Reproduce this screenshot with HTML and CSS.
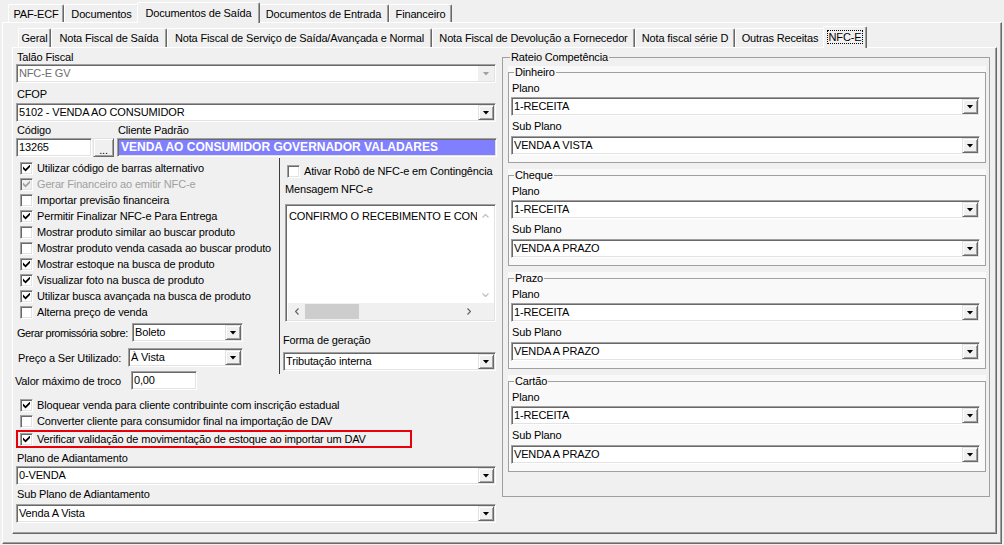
FILE: index.html
```html
<!DOCTYPE html>
<html lang="pt-BR">
<head>
<meta charset="utf-8">
<title>NFC-E</title>
<link rel="stylesheet" href="styles.css">
</head>
<body>
<div class="window">
  <div class="tabstrip outer-tabs">
    <div class="tab t1">PAF-ECF</div>
    <div class="tab t2">Documentos</div>
    <div class="tab t3 active">Documentos de Saída</div>
    <div class="tab t4">Documentos de Entrada</div>
    <div class="tab t5">Financeiro</div>
  </div>
  <div class="page outer-page">
    <div class="tabstrip inner-tabs">
      <div class="tab i1">Geral</div>
      <div class="tab i2">Nota Fiscal de Saída</div>
      <div class="tab i3">Nota Fiscal de Serviço de Saída/Avançada e Normal</div>
      <div class="tab i4">Nota Fiscal de Devolução a Fornecedor</div>
      <div class="tab i5">Nota fiscal série D</div>
      <div class="tab i6">Outras Receitas</div>
      <div class="tab i7 active"><span class="focus">NFC-E</span></div>
    </div>
    <div class="page inner-page">
      <div class="left-col">
        <div class="lbl">Talão Fiscal</div>
        <div class="combo disabled"><span class="val">NFC-E GV</span><span class="btn"><i class="arrow"></i></span></div>
        <div class="lbl mt5">CFOP</div>
        <div class="combo mt2"><span class="val">5102 - VENDA AO CONSUMIDOR</span><span class="btn"><i class="arrow"></i></span></div>
        <div class="code-labels mt2"><span class="lbl code-lbl">Código</span><span class="lbl">Cliente Padrão</span></div>
        <div class="code-row">
          <div class="edit code"><span class="val">13265</span></div>
          <div class="button dots">...</div>
          <div class="client">VENDA AO CONSUMIDOR GOVERNADOR VALADARES</div>
        </div>
        <div class="mid">
          <div class="checks">
            <div class="chk"><span class="box on"></span>Utilizar código de barras alternativo</div>
            <div class="chk dis"><span class="box on"></span>Gerar Financeiro ao emitir NFC-e</div>
            <div class="chk"><span class="box"></span>Importar previsão financeira</div>
            <div class="chk"><span class="box on"></span>Permitir Finalizar NFC-e Para Entrega</div>
            <div class="chk"><span class="box"></span>Mostrar produto similar ao buscar produto</div>
            <div class="chk"><span class="box"></span>Mostrar produto venda casada ao buscar produto</div>
            <div class="chk"><span class="box on"></span>Mostrar estoque na busca de produto</div>
            <div class="chk"><span class="box on"></span>Visualizar foto na busca de produto</div>
            <div class="chk"><span class="box on"></span>Utilizar busca avançada na busca de produto</div>
            <div class="chk"><span class="box"></span>Alterna preço de venda</div>
            <div class="frow promo">
              <span class="flabel">Gerar promissória sobre:</span>
              <div class="combo"><span class="val">Boleto</span><span class="btn"><i class="arrow"></i></span></div>
            </div>
            <div class="frow preco">
              <span class="flabel">Preço a Ser Utilizado:</span>
              <div class="combo"><span class="val">À Vista</span><span class="btn"><i class="arrow"></i></span></div>
            </div>
            <div class="frow troco">
              <span class="flabel">Valor máximo de troco</span>
              <div class="edit"><span class="val">0,00</span></div>
            </div>
          </div>
          <div class="side">
            <div class="chk"><span class="box"></span>Ativar Robô de NFC-e em Contingência</div>
            <div class="lbl msg-lbl">Mensagem NFC-e</div>
            <div class="memo">
              <div class="memo-text">CONFIRMO O RECEBIMENTO E CON</div>
              <div class="vscroll">
                <svg width="7" height="4" viewBox="0 0 7 4"><polyline points="0.5,3.5 3.5,0.5 6.5,3.5" fill="none" stroke="#bfbfbf" stroke-width="1.2"/></svg>
                <svg width="7" height="4" viewBox="0 0 7 4"><polyline points="0.5,0.5 3.5,3.5 6.5,0.5" fill="none" stroke="#bfbfbf" stroke-width="1.2"/></svg>
              </div>
              <div class="hscroll">
                <span class="sbtn"><svg width="4" height="7" viewBox="0 0 4 7"><polyline points="3.5,0.5 0.5,3.5 3.5,6.5" fill="none" stroke="#606060" stroke-width="1.2"/></svg></span>
                <span class="thumb"></span>
                <span class="track"></span>
                <span class="sbtn"><svg width="4" height="7" viewBox="0 0 4 7"><polyline points="0.5,0.5 3.5,3.5 0.5,6.5" fill="none" stroke="#606060" stroke-width="1.2"/></svg></span>
              </div>
              <div class="corner"></div>
            </div>
            <div class="lbl forma-lbl">Forma de geração</div>
            <div class="combo forma"><span class="val">Tributação interna</span><span class="btn"><i class="arrow"></i></span></div>
          </div>
        </div>
        <div class="bottom">
          <div class="chk"><span class="box on"></span>Bloquear venda para cliente contribuinte com inscrição estadual</div>
          <div class="chk"><span class="box"></span>Converter cliente para consumidor final na importação de DAV</div>
          <div class="chk marked"><span class="box on"></span>Verificar validação de movimentação de estoque ao importar um DAV</div>
          <div class="lbl plano-lbl">Plano de Adiantamento</div>
          <div class="combo mt1"><span class="val">0-VENDA</span><span class="btn"><i class="arrow"></i></span></div>
          <div class="lbl sub-lbl">Sub Plano de Adiantamento</div>
          <div class="combo mt3"><span class="val">Venda A Vista</span><span class="btn"><i class="arrow"></i></span></div>
        </div>
      </div>
      <fieldset class="rateio">
        <legend>Rateio Competência</legend>
        <div class="rateio-body">
          <div class="sub">
            <fieldset>
              <legend>Dinheiro</legend>
              <div class="sub-body">
                <div class="lbl">Plano</div>
                <div class="combo mt2"><span class="val">1-RECEITA</span><span class="btn"><i class="arrow"></i></span></div>
                <div class="lbl mt4">Sub Plano</div>
                <div class="combo mt3"><span class="val">VENDA A VISTA</span><span class="btn"><i class="arrow"></i></span></div>
              </div>
            </fieldset>
          </div>
          <div class="sub">
            <fieldset>
              <legend>Cheque</legend>
              <div class="sub-body">
                <div class="lbl">Plano</div>
                <div class="combo mt2"><span class="val">1-RECEITA</span><span class="btn"><i class="arrow"></i></span></div>
                <div class="lbl mt4">Sub Plano</div>
                <div class="combo mt3"><span class="val">VENDA A PRAZO</span><span class="btn"><i class="arrow"></i></span></div>
              </div>
            </fieldset>
          </div>
          <div class="sub">
            <fieldset>
              <legend>Prazo</legend>
              <div class="sub-body">
                <div class="lbl">Plano</div>
                <div class="combo mt2"><span class="val">1-RECEITA</span><span class="btn"><i class="arrow"></i></span></div>
                <div class="lbl mt4">Sub Plano</div>
                <div class="combo mt3"><span class="val">VENDA A PRAZO</span><span class="btn"><i class="arrow"></i></span></div>
              </div>
            </fieldset>
          </div>
          <div class="sub">
            <fieldset>
              <legend>Cartão</legend>
              <div class="sub-body">
                <div class="lbl">Plano</div>
                <div class="combo mt2"><span class="val">1-RECEITA</span><span class="btn"><i class="arrow"></i></span></div>
                <div class="lbl mt4">Sub Plano</div>
                <div class="combo mt3"><span class="val">VENDA A PRAZO</span><span class="btn"><i class="arrow"></i></span></div>
              </div>
            </fieldset>
          </div>
        </div>
      </fieldset>
    </div>
  </div>
</div>
</body>
</html>
```
FILE: styles.css
```css
* { box-sizing: border-box; }
html, body { margin: 0; padding: 0; }
body {
  width: 1004px;
  height: 545px;
  overflow: hidden;
  background: #f0f0f0;
  font-family: "Liberation Sans", Arial, sans-serif;
  font-size: 11px;
  letter-spacing: -0.15px;
  color: #000;
}

.window { padding: 2px 2px 0 2px; }

/* ---------- tabs ---------- */
.tabstrip { display: flex; align-items: flex-end; }
.outer-tabs { height: 20px; padding-left: 6px; }
.inner-tabs { height: 24px; padding-left: 15px; }

.tab {
  height: 18px;
  padding-top: 2px;
  line-height: 15px;
  text-align: center;
  white-space: nowrap;
  background: #f0f0f0;
  border-top: 1px solid #fff;
  border-left: 1px solid #fff;
  border-right: 1px solid #696969;
  box-shadow: inset -1px 0 0 #a0a0a0;
  border-radius: 2px 2px 0 0;
}
.inner-tabs .tab { height: 19px; }
.tab.active {
  position: relative;
  z-index: 1;
  height: 21px;
  padding-top: 3px;
  margin: 0 -2px -1px;
}
.inner-tabs .tab.active { height: 22px; padding-top: 3px; }
.focus { outline: 1px dotted #000; outline-offset: 0; padding: 0 1px; }

.t1 { width: 56px; }
.t2 { width: 75px; }
.t3 { width: 123px; }
.t4 { width: 131px; }
.t5 { width: 63px; }

.i1 { width: 33px; }
.i2 { width: 116px; }
.i3 { width: 265px; }
.i4 { width: 203px; }
.i5 { width: 100px; }
.i6 { width: 90px; }
.i7 { width: 44px; }

/* ---------- pages ---------- */
.page {
  border-top: 1px solid #fff;
  border-left: 1px solid #fff;
  border-right: 1px solid #696969;
  border-bottom: 1px solid #696969;
  box-shadow: inset -1px -1px 0 #a0a0a0;
}
.outer-page { width: 1000px; height: 522px; }
.inner-page {
  margin-left: 9px;
  width: 985px;
  height: 487px;
  display: flex;
  gap: 5px;
  padding: 3px 5px 0 3px;
}

/* ---------- generic controls ---------- */
.lbl { height: 13px; line-height: 13px; padding-left: 1px; white-space: nowrap; }
.mt1 { margin-top: 1px; }
.mt2 { margin-top: 2px; }
.mt3 { margin-top: 3px; }
.mt4 { margin-top: 4px; }
.mt5 { margin-top: 5px; }

.combo, .edit, .client {
  height: 19px;
  background: #fff;
  border: 1px solid;
  border-color: #a0a0a0 #fff #fff #a0a0a0;
  box-shadow: inset 1px 1px 0 #696969, inset -1px -1px 0 #e3e3e3;
}
.combo { display: flex; margin-right: 1px; }
.val {
  flex: 1;
  padding: 1px 0 0 2px;
  line-height: 15px;
  white-space: nowrap;
  overflow: hidden;
}
.edit { display: flex; }
.btn {
  width: 16px;
  height: 15px;
  margin: 1px 1px 0 0;
  display: flex;
  align-items: center;
  justify-content: center;
  background: #f0f0f0;
  border: 1px solid;
  border-color: #e3e3e3 #696969 #696969 #e3e3e3;
  box-shadow: inset 1px 1px 0 #fff, inset -1px -1px 0 #a0a0a0;
}
.arrow {
  display: block;
  width: 7px;
  height: 4px;
  background: #000;
  clip-path: polygon(0 0, 100% 0, 50% 100%);
}
.combo.disabled .val { color: #6d6d6d; }
.combo.disabled .btn {
  border-color: #f0f0f0;
  box-shadow: none;
}
.combo.disabled .arrow { background: #a0a0a0; }

.button {
  background: #f0f0f0;
  border: 1px solid;
  border-color: #e3e3e3 #696969 #696969 #e3e3e3;
  box-shadow: inset 1px 1px 0 #fff, inset -1px -1px 0 #a0a0a0;
}

/* checkbox */
.chk {
  display: flex;
  align-items: center;
  gap: 4px;
  height: 16px;
  padding-left: 4px;
  white-space: nowrap;
}
.box {
  width: 13px;
  height: 13px;
  flex: none;
  background: #fff;
  border: 1px solid;
  border-color: #a0a0a0 #fff #fff #a0a0a0;
  box-shadow: inset 1px 1px 0 #696969, inset -1px -1px 0 #e3e3e3;
  display: flex;
  align-items: center;
  justify-content: center;
}
.box.on::after {
  content: "";
  display: block;
  width: 7px;
  height: 7px;
  background: #000;
  clip-path: polygon(0 30%, 36% 64%, 100% 0, 100% 36%, 36% 100%, 0 66%);
}
.chk.dis { color: #a0a0a0; }
.chk.dis .box { background: #f0f0f0; }
.chk.dis .box.on::after { background: #a0a0a0; }

/* ---------- left column ---------- */
.left-col { width: 481px; display: flex; flex-direction: column; }
.code-labels { display: flex; }
.code-lbl { width: 101px; }
.code-row { display: flex; margin-top: 1px; }
.edit.code { width: 76px; }
.dots {
  width: 21px;
  height: 19px;
  margin-left: 1px;
  line-height: 22px;
  text-align: center;
}
.client {
  flex: 1;
  margin-left: 3px;
  background: #8080ff;
  color: #fff;
  font-weight: bold;
  font-size: 12px;
  letter-spacing: 0;
  line-height: 16px;
  padding-left: 3px;
  white-space: nowrap;
  overflow: hidden;
}

.mid { display: flex; margin-top: 1px; }
.checks { width: 263px; padding-top: 2px; }
.side {
  width: 218px;
  height: 216px;
  border-left: 1px solid #3c3c3c;
  padding: 5px 0 0 4px;
  display: flex;
  flex-direction: column;
}
.side .chk { padding-left: 3px; }
.msg-lbl { margin-top: 4px; }
.memo {
  margin: 8px 0 0 1px;
  width: 211px;
  height: 118px;
  display: grid;
  grid-template-columns: 1fr 17px;
  grid-template-rows: 1fr 17px;
  background: #fff;
  border: 1px solid;
  border-color: #a0a0a0 #fff #fff #a0a0a0;
  box-shadow: inset 1px 1px 0 #696969, inset -1px -1px 0 #e3e3e3;
  padding: 2px 1px 1px 2px;
}
.memo-text {
  padding: 3px 0 0 1px;
  line-height: 13px;
  white-space: nowrap;
  overflow: hidden;
}
.vscroll {
  background: #fff;
  display: flex;
  flex-direction: column;
  align-items: center;
  justify-content: space-between;
  padding: 7px 0 6px;
}
.hscroll { display: flex; align-items: stretch; background: #f0f0f0; }
.sbtn { width: 17px; display: flex; align-items: center; justify-content: center; }
.thumb { width: 54px; margin: 1px 0; background: #cdcdcd; }
.track { flex: 1; }
.corner { background: #f0f0f0; }
.forma-lbl { margin: 12px 0 0 -1px; padding-left: 0; }
.combo.forma { margin: 5px 0 0 -1px; width: 213px; }

.frow { display: flex; align-items: center; height: 19px; }
.flabel { white-space: nowrap; flex: none; }
.promo { margin-top: 3px; }
.promo .flabel { width: 116px; padding-left: 1px; letter-spacing: -0.45px; }
.promo .combo { width: 111px; }
.preco { margin-top: 6px; }
.preco .flabel { width: 112px; padding-left: 2px; }
.preco .combo { width: 115px; }
.troco { margin-top: 4px; }
.troco .flabel { width: 116px; margin-left: -1px; }
.troco .edit { width: 66px; }

.bottom { display: flex; flex-direction: column; margin-top: 7px; }
.chk.marked {
  margin-top: 1px;
  width: 396px;
  height: 18px;
  border: 2px solid #e8000b;
  padding-left: 2px;
}
.plano-lbl { margin-top: 4px; }
.sub-lbl { margin-top: 3px; }

/* ---------- right column ---------- */
fieldset { margin: 0; padding: 0; min-width: 0; border: 1px solid #a0a0a0; }
legend { padding: 0 1px; line-height: 13px; }
.rateio { width: 488px; height: 446px; }
.rateio > legend { margin-left: 7px; }
.rateio-body { padding: 2px 3px 0 5px; }
.sub { background: #f9f9f9; }
.sub + .sub { margin-top: 6px; }
.sub legend { margin-left: 5px; }
.sub-body { padding: 3px 5px 7px 2px; }
.sub-body .lbl { padding-left: 1px; }
.sub-body .combo { margin-right: 0; }
```
